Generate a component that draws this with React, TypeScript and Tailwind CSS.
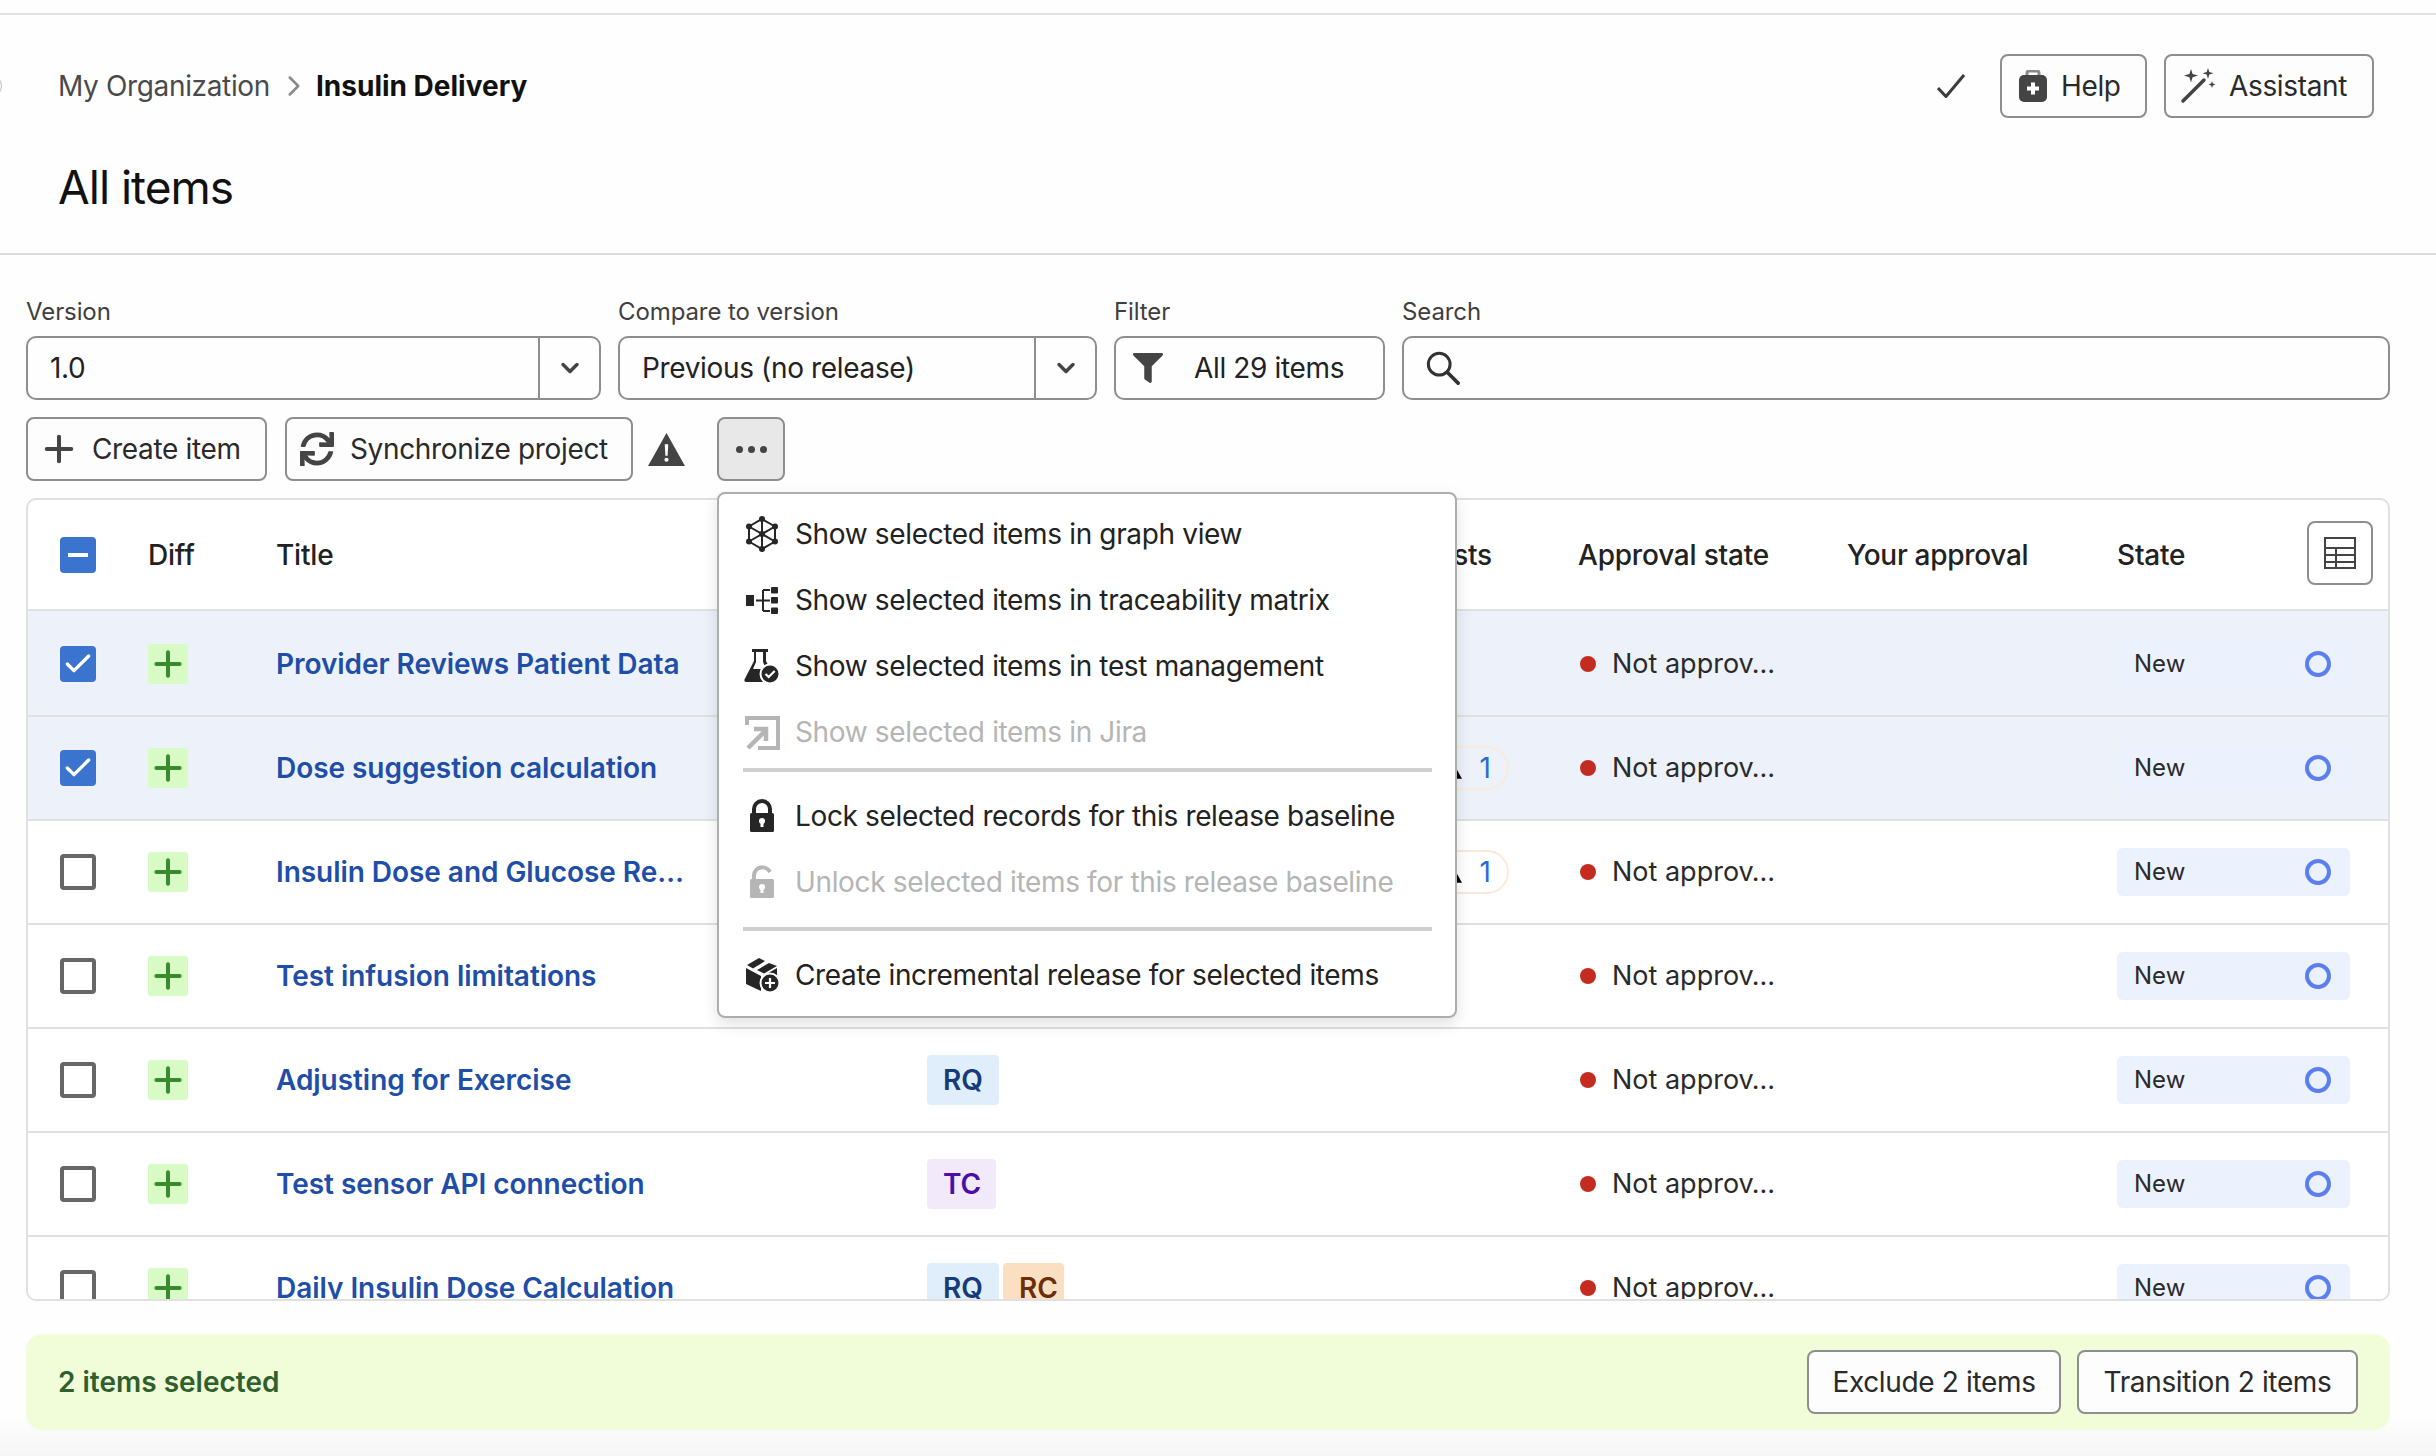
import React from "react";
import { FaFilter, FaSync } from "react-icons/fa";
import { Plus, ChevronRight, ChevronDown, Check } from "lucide-react";

const Btn = ({ children, className = "" }: { children: React.ReactNode; className?: string }) => (
  <div className={"flex items-center rounded-[8px] border-2 border-[#8e8e8e] bg-[#fdfdfd] text-[28px] text-[#2a2a2a] " + className}>{children}</div>
);

const Field = ({ label, width, children }: { label: string; width: string; children: React.ReactNode }) => (
  <div className={"flex flex-col " + width}>
    <div className="mb-[11px] h-[26px] text-[24px] leading-[26px] tracking-[-0.1px] text-[#3f3f3f]">{label}</div>
    <div className="flex h-[64px] items-center rounded-[10px] border-2 border-[#8e8e8e] text-[28px] text-[#222]">{children}</div>
  </div>
);

const Warn = ({ w, h, color, hole }: { w: number; h: number; color: string; hole: string }) => (
  <svg viewBox="0 0 36 32" width={w} height={h}>
    <path d="M18 0 L36 32 H0 Z" fill={color} />
    <path d="M16.300 11h3.400l-.6 11h-2.200z" fill={hole} />
    <circle cx="18" cy="26" r="2" fill={hole} />
  </svg>
);

const Graph = () => (
  <svg viewBox="0 0 36 36" className="h-[36px] w-[36px]" fill="none" stroke="#262626" strokeWidth="2">
    <path d="M18 3 L31 10.5 V25.5 L18 33 L5 25.5 V10.5 Z M18 3 V33 M5 10.5 L31 25.5 M31 10.5 L5 25.5" />
    {[[18, 3], [31, 10.5], [31, 25.5], [18, 33], [5, 25.5], [5, 10.5], [18, 18]].map(([x, y], i) => (
      <circle key={i} cx={x} cy={y} r="3" fill="#262626" stroke="none" />
    ))}
  </svg>
);
const TreeIcon = () => (
  <svg viewBox="0 0 36 36" className="h-[36px] w-[36px]" fill="#262626">
    <rect x="2" y="13" width="8" height="11" />
    <path d="M12 18.500h7M19 8v21M19 8h7M19 18.500h7M19 29h7" stroke="#262626" strokeWidth="2" fill="none" />
    <rect x="27" y="5" width="7" height="6.500" rx="1" />
    <rect x="27" y="15" width="7" height="6.500" rx="1" />
    <rect x="27" y="25.500" width="7" height="6.500" rx="1" />
  </svg>
);
const Flask = () => (
  <svg viewBox="0 0 36 36" className="h-[36px] w-[36px]">
    <path d="M8 1h16v3h-2v9l4 8-6 13H2c-1 0-2-1-1.500-2.500L10 13V4H8z M12 4v10l-3 7h13l-3-7V4z" fill="#262626" fillRule="evenodd" />
    <circle cx="26" cy="26" r="9.500" fill="#262626" stroke="#fff" strokeWidth="2" />
    <path d="M21.500 26l3.200 3 6-6" fill="none" stroke="#fff" strokeWidth="2.200" />
  </svg>
);
const JiraIcon = () => (
  <svg viewBox="0 0 36 36" className="h-[36px] w-[36px]" fill="none" stroke="#b5b5b5">
    <path d="M3 11V4h31v30H14" strokeWidth="4" />
    <path d="M4 34 L21 17 M10 15h12v12" strokeWidth="4.500" />
  </svg>
);
const LockIcon = ({ open }: { open?: boolean }) => {
  const c = open ? "#b5b5b5" : "#262626";
  return (
    <svg viewBox="0 0 36 36" className="h-[36px] w-[36px]">
      <path d={open ? "M10 17V11a8.500 8.500 0 0 1 16 -3" : "M10 17V11a8 8 0 0 1 16 0V17"} fill="none" stroke={c} strokeWidth="4" />
      <rect x="6" y="15" width="24" height="19" rx="1.500" fill={c} />
      <circle cx="18" cy="23" r="3" fill="#fff" />
      <rect x="16.500" y="23" width="3" height="6" fill="#fff" />
    </svg>
  );
};
const BoxPlus = () => (
  <svg viewBox="0 0 36 36" className="h-[36px] w-[36px]">
    <path d="M2 11 L17 19 V34 L2 27 Z" fill="#262626" />
    <path d="M19 19 L33 11 V18 L19 27 Z" fill="#262626" />
    <path d="M3 8 L15 1 L21 4 L9 11.500 Z M13 13 L25 6 L33 9 L20 16.500 Z" fill="#262626" />
    <circle cx="26" cy="26" r="9.500" fill="#262626" stroke="#fff" strokeWidth="2" />
    <path d="M26 21v10M21 26h10" stroke="#fff" strokeWidth="2.200" />
  </svg>
);

const Item = ({ icon, label, off }: { icon: React.ReactNode; label: string; off?: boolean }) => (
  <div className={"flex h-[66px] items-center text-[28px] " + (off ? "text-[#b5b5b5]" : "text-[#222]")}>
    <div className="flex w-[52px] shrink-0 items-center justify-start pl-[1px]">{icon}</div>
    {label}
  </div>
);

const Tag = ({ t }: { t: string }) => {
  const c =
    t === "RQ" ? "bg-[#e0eefc] text-[#173a7a] w-[72px]" : t === "TC" ? "bg-[#f2eafb] text-[#4b0fa8] w-[69px]" : "bg-[#fadfc2] text-[#6b2e0a] w-[61px]";
  return <div className={"flex h-[50px] items-center rounded-[4px] pl-[16px] text-[28px] font-semibold tracking-normal " + c}>{t}</div>;
};

const rows: { title: string; sel?: boolean; tags: string[]; warn?: boolean; h: string }[] = [
  { title: "Provider Reviews Patient Data", sel: true, tags: [], h: "h-[106px] pt-[2px]" },
  { title: "Dose suggestion calculation", sel: true, tags: [], warn: true, h: "h-[104px]" },
  { title: "Insulin Dose and Glucose Re…", tags: [], warn: true, h: "h-[104px]" },
  { title: "Test infusion limitations", tags: [], h: "h-[104px]" },
  { title: "Adjusting for Exercise", tags: ["RQ"], h: "h-[104px]" },
  { title: "Test sensor API connection", tags: ["TC"], h: "h-[104px]" },
  { title: "Daily Insulin Dose Calculation", tags: ["RQ", "RC"], h: "h-[104px]" },
];

const cols = "grid grid-cols-[120px_128px_651px_651px_269px_270px_270px] items-center";

export default function App() {
  return (
    <div className="relative flex h-[1456px] w-[2436px] flex-col overflow-hidden bg-[linear-gradient(to_bottom,#fefefe_97%,#f6f6f6_100%)] font-['Inter',sans-serif] tracking-[-0.35px] text-[#222]">
      <div className="absolute left-[-22px] top-[74px] h-[24px] w-[24px] rounded-full border border-[#bbb]" />
      <div className="mt-[13px] h-[2px] shrink-0 bg-[#e2e2e2]" />
      {/* header */}
      <div className="flex h-[240px] shrink-0 flex-col border-b-2 border-[#dcdcdc] pl-[58px] pr-[62px]">
        <div className="mt-[39px] flex h-[64px] items-center">
          <span className="text-[28px] text-[#4a4a4a]">My Organization</span>
          <ChevronRight size={34} className="ml-[7px] mr-[5px] text-[#8a8a8a]" strokeWidth={1.800} />
          <span className="text-[28px] font-bold tracking-normal text-[#111]">Insulin Delivery</span>
          <div className="ml-auto flex items-center">
            <svg viewBox="0 0 28 24" className="mr-[35px] h-[24px] w-[28px]" fill="none" stroke="#3c3c3c" strokeWidth="3">
              <path d="M1 14 L9 22.500 L27 1" />
            </svg>
            <Btn className="mr-[17px] h-[64px] w-[147px] pl-[16px]">
              <svg viewBox="0 0 30 32" className="mr-[13px] h-[32px] w-[30px]">
                <path d="M9 7V3a2 2 0 0 1 2-2h8a2 2 0 0 1 2 2v4" fill="none" stroke="#8a8a8a" strokeWidth="3" />
                <rect x="1" y="5" width="28" height="27" rx="5" fill="#444" />
                <path d="M15 12.500v12M9 18.500h12" stroke="#fff" strokeWidth="4" />
              </svg>
              Help
            </Btn>
            <Btn className="h-[64px] w-[210px] pl-[14px]">
              <svg viewBox="0 0 36 36" className="mr-[13px] h-[36px] w-[36px]">
                <path d="M3 33 L24 12" stroke="#444" strokeWidth="3.500" strokeLinecap="round" />
                <path d="M11 1l1.600 5 5.400 1.600-5.400 1.600L11 14.500l-1.600-5.300-5.400-1.600 5.400-1.600zM28 0l1.300 4 4.200 1.300-4.200 1.300L28 11l-1.300-4.400-4.200-1.300 4.200-1.300zM32 13l.9 2.600 2.600.9-2.600.9-.9 2.600-.9-2.600-2.600-.9 2.600-.9z" fill="#444" />
              </svg>
              Assistant
            </Btn>
          </div>
        </div>
        <div className="mt-[40px] text-[46px] leading-[58px] tracking-[-1px] text-[#111]">All items</div>
      </div>

      {/* main */}
      <div className="flex min-h-0 flex-1 flex-col pl-[26px] pr-[46px] pt-[44px]">
        <div className="flex gap-[17px]">
          <Field label="Version" width="w-[575px]">
            <span className="flex-1 pl-[22px]">1.0</span>
            <div className="flex h-full w-[61px] items-center justify-center border-l-2 border-[#8e8e8e]"><ChevronDown size={28} strokeWidth={3} className="text-[#444]" /></div>
          </Field>
          <Field label="Compare to version" width="w-[479px]">
            <span className="flex-1 pl-[22px]">Previous (no release)</span>
            <div className="flex h-full w-[61px] items-center justify-center border-l-2 border-[#8e8e8e]"><ChevronDown size={28} strokeWidth={3} className="text-[#444]" /></div>
          </Field>
          <Field label="Filter" width="w-[271px]">
            <FaFilter size={30} className="ml-[17px] mr-[31px] text-[#444]" />
            <span>All 29 items</span>
          </Field>
          <Field label="Search" width="flex-1">
            <svg viewBox="0 0 36 36" className="ml-[22px] h-[34px] w-[34px]" fill="none" stroke="#333">
              <circle cx="14" cy="14" r="11.500" strokeWidth="3.200" />
              <path d="M22.500 22.500 L34 34" strokeWidth="3.800" strokeLinecap="round" />
            </svg>
          </Field>
        </div>

        <div className="mt-[17px] flex h-[64px] items-center">
          <Btn className="h-[64px] w-[241px] pl-[10px]"><Plus size={42} strokeWidth={2.300} className="mr-[12px] text-[#444]" />Create item</Btn>
          <Btn className="ml-[18px] h-[64px] w-[348px] pl-[13px]"><FaSync size={34} className="mr-[16px] text-[#444]" />Synchronize project</Btn>
          <div className="ml-[15px]"><Warn w={37} h={33} color="#444" hole="#fefefe" /></div>
          <div className="ml-[32px] flex h-[64px] w-[68px] items-center justify-center gap-[5px] rounded-[8px] border-2 border-[#8e8e8e] bg-[#e8e8e8]">
            <i className="h-[7px] w-[7px] rounded-full bg-[#444]" /><i className="h-[7px] w-[7px] rounded-full bg-[#444]" /><i className="h-[7px] w-[7px] rounded-full bg-[#444]" />
          </div>
        </div>

        {/* table */}
        <div className="mt-[17px] h-[803px] shrink-0 overflow-hidden rounded-[10px] border-2 border-[#e0e0e0] bg-white">
          <div className={cols + " h-[111px] border-b-2 border-[#e0e0e0] text-[28px] font-medium tracking-[-0.2px] text-[#222]"}>
            <div className="pl-[32px]">
              <div className="flex h-[36px] w-[36px] items-center justify-center rounded-[4px] bg-[#3b74cf]"><div className="h-[4px] w-[20px] bg-white" /></div>
            </div>
            <div>Diff</div>
            <div>Title</div>
            <div className="relative h-[34px]">
              <span className="absolute left-[494px] top-0 leading-[34px]">Tests</span>
            </div>
            <div>Approval state</div>
            <div className="tracking-[-0.3px]">Your approval</div>
            <div className="relative">State
              <div className="absolute right-[14px] top-[-13px] flex h-[64px] w-[66px] items-center justify-center rounded-[8px] border-2 border-[#8e8e8e] bg-white">
                <svg viewBox="0 0 32 32" className="h-[32px] w-[32px]" fill="none" stroke="#444" strokeWidth="2">
                  <rect x="1" y="1" width="30" height="30" />
                  <path d="M1 11h30M1 18h30M1 25h30M12 11v20" />
                </svg>
              </div>
            </div>
          </div>
          {rows.map((r, i) => (
            <div key={i} className={cols + " " + r.h + " border-b-2 border-[#e0e0e0] " + (r.sel ? "bg-[#edf2fa]" : "bg-white")}>
              <div className="pl-[32px]">
                {r.sel ? (
                  <div className="flex h-[36px] w-[36px] items-center justify-center rounded-[4px] bg-[#3b74cf]"><Check size={32} strokeWidth={2.500} className="text-white" /></div>
                ) : (
                  <div className="h-[36px] w-[36px] rounded-[4px] border-[4px] border-[#666] bg-white" />
                )}
              </div>
              <div>
                <div className="flex h-[40px] w-[40px] items-center justify-center rounded-[3px] bg-[#d8fac4]"><Plus size={40} strokeWidth={2.400} className="shrink-0 text-[#3a8a2e]" /></div>
              </div>
              <div className="text-[28px] font-semibold tracking-[-0.05px] text-[#1e4ea8]">{r.title}</div>
              <div className="relative flex gap-[4px]">
                {r.tags.map((t) => <Tag key={t} t={t} />)}
                {r.warn && (
                  <div className="absolute left-[481px] top-[-22px] flex h-[44px] w-[101px] items-center justify-end rounded-full border-2 border-[#fbeadb] pr-[16px] text-[28px] tracking-normal text-[#2b6cd4]">
                    <Warn w={24} h={22} color="#000" hole="#000" />
                    <span className="ml-[18px]">1</span>
                  </div>
                )}
              </div>
              <div className="flex items-center pl-[2px] text-[27px] tracking-normal text-[#2a2a2a]">
                <span className="mr-[16px] h-[16px] w-[16px] rounded-full bg-[#c32d21]" />Not approv…
              </div>
              <div />
              <div className="flex h-[48px] w-[233px] items-center justify-between rounded-[6px] bg-[#ebf1fd] pl-[17px] pr-[19px] text-[24px] tracking-normal text-[#2a2a2a]">
                New
                <span className="h-[26px] w-[26px] rounded-full border-[4px] border-[#5b7fee]" />
              </div>
            </div>
          ))}
        </div>

        {/* selection bar */}
        <div className="mt-[33px] flex h-[96px] w-[2364px] shrink-0 items-center justify-between rounded-[16px] bg-[#f1fdd9] px-[32px]">
          <span className="text-[28px] font-semibold tracking-normal text-[#2f5f2c]">2 items selected</span>
          <div className="flex gap-[16px]">
            <Btn className="h-[64px] w-[254px] justify-center">Exclude 2 items</Btn>
            <Btn className="h-[64px] w-[281px] justify-center">Transition 2 items</Btn>
          </div>
        </div>
      </div>

      {/* dropdown menu */}
      <div className="absolute left-[717px] top-[492px] flex w-[740px] flex-col rounded-[8px] border-2 border-[#adadad] bg-white pb-[8px] pl-[24px] pr-[23px] pt-[7px] shadow-[0_6px_16px_rgba(0,0,0,0.12)]">
        <Item icon={<Graph />} label="Show selected items in graph view" />
        <Item icon={<TreeIcon />} label="Show selected items in traceability matrix" />
        <Item icon={<Flask />} label="Show selected items in test management" />
        <Item icon={<JiraIcon />} label="Show selected items in Jira" off />
        <div className="mb-[11px] mt-[3px] h-[4px] bg-[#cfcfcf]" />
        <Item icon={<LockIcon />} label="Lock selected records for this release baseline" />
        <Item icon={<LockIcon open />} label="Unlock selected items for this release baseline" off />
        <div className="mb-[11px] mt-[12px] h-[4px] bg-[#cfcfcf]" />
        <Item icon={<BoxPlus />} label="Create incremental release for selected items" />
      </div>
    </div>
  );
}
